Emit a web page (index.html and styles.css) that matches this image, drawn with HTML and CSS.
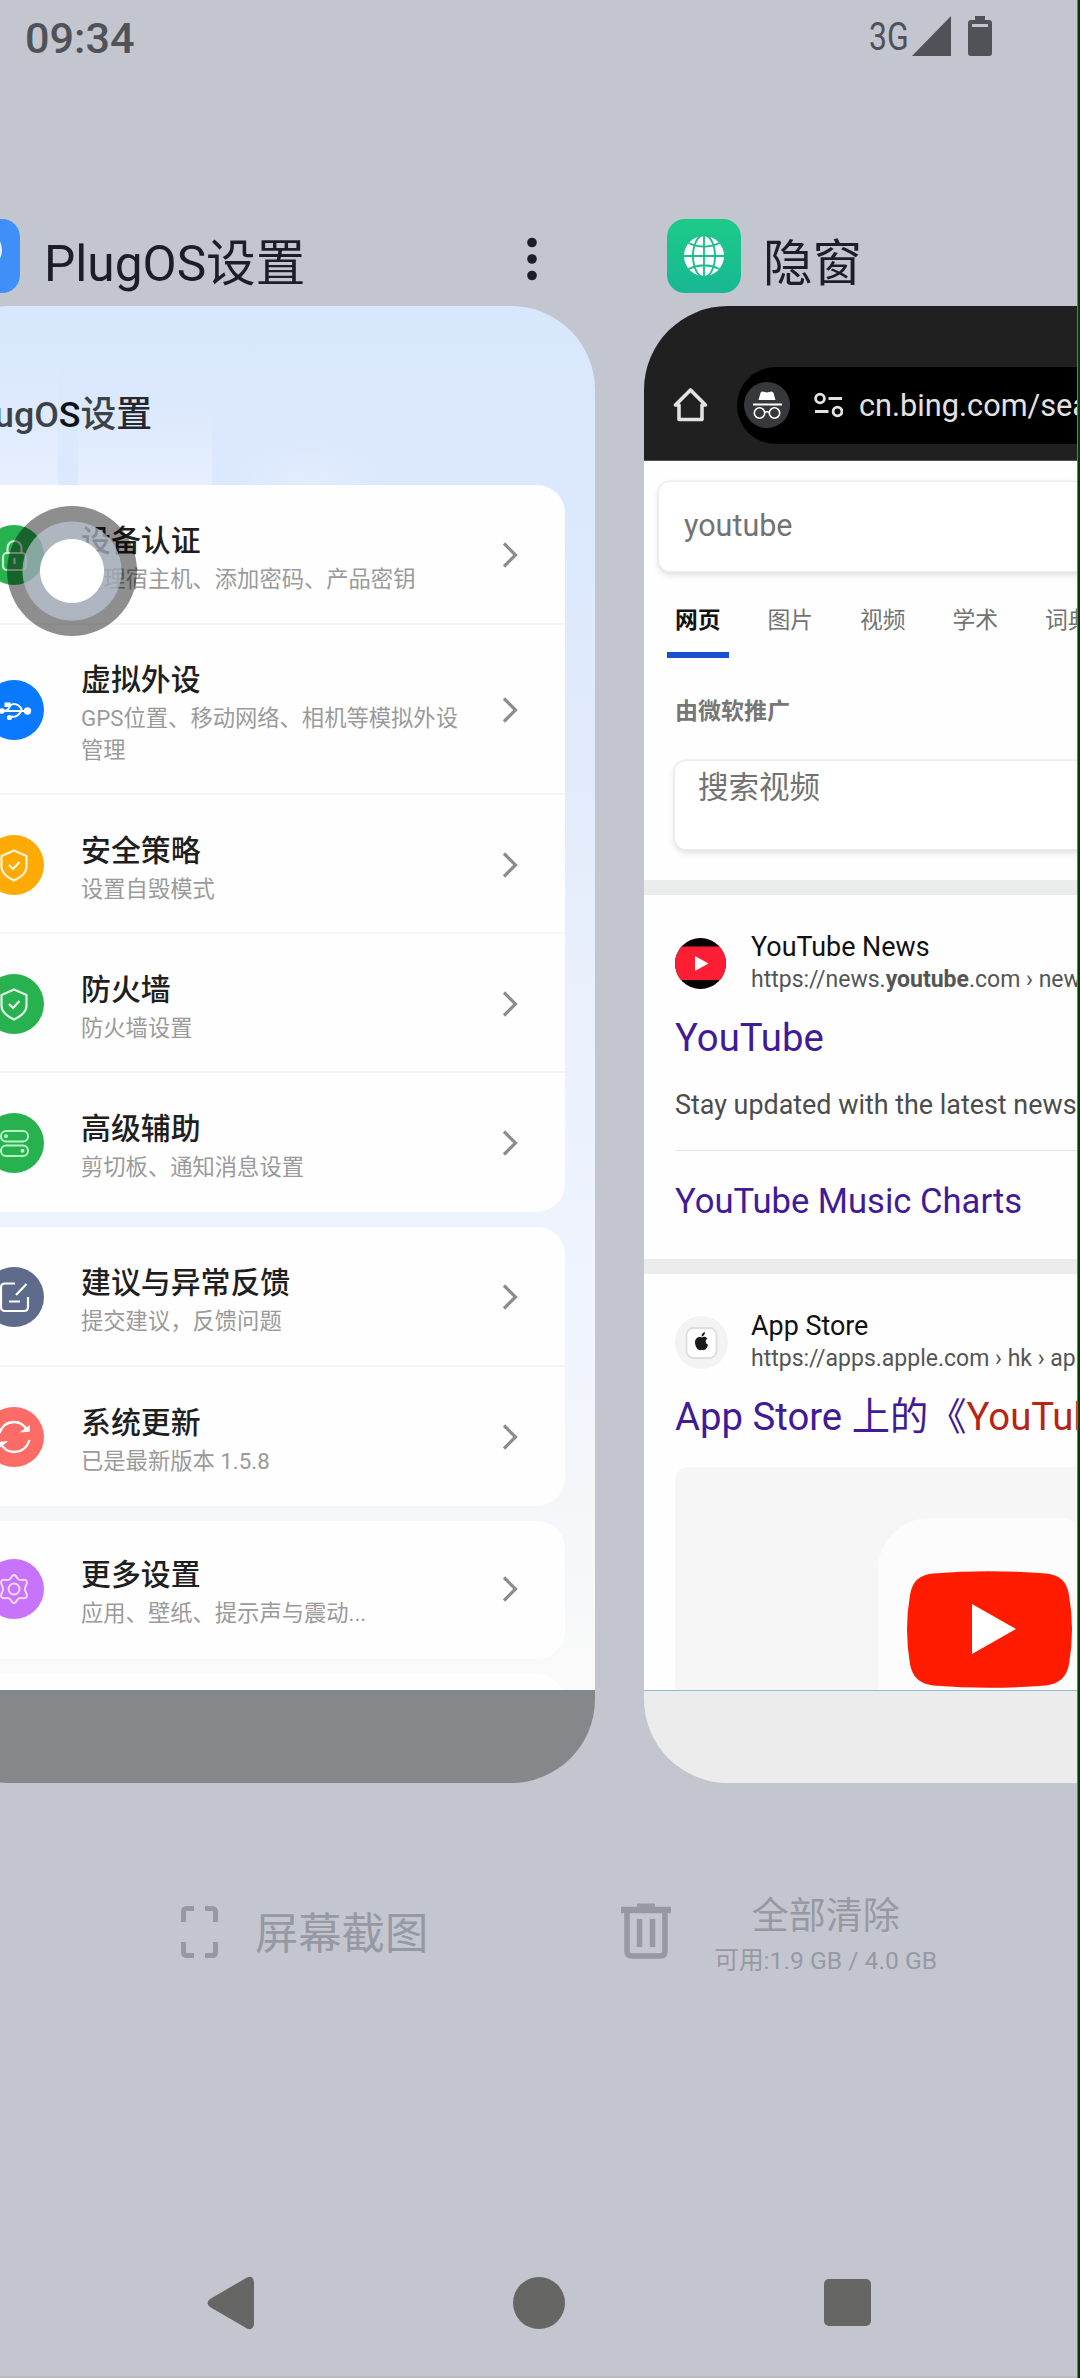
FILE: index.html
```html
<!DOCTYPE html>
<html lang="zh-CN">
<head>
<meta charset="utf-8">
<title>最近任务</title>
<link rel="stylesheet" href="styles.css">
</head>
<body>
<svg width="0" height="0" class="defs">
  <symbol id="chev" viewBox="0 0 16 26"><path d="M2 1.500 13.500 13 2 24.500" fill="none" stroke="#8c8c8c" stroke-width="3.200"/></symbol>
  <symbol id="shield" viewBox="0 0 60 60"><path d="M30 15.500 42.500 21V32c0 6-5 10-12.500 13.500-7.500-3.500-12.500-7.500-12.500-13.500V21z" fill="none" stroke="#fff" stroke-opacity=".85" stroke-width="2.200" stroke-linejoin="round"/><path d="m25 30 4 4 6.500-7" fill="none" stroke="#fff" stroke-opacity=".9" stroke-width="2.200"/></symbol>
</svg>
<div class="screen">
  <header class="status">
    <span class="clock">09:34</span>
    <div class="status-icons">
      <span class="net">3G</span>
      <svg width="39" height="40" viewBox="0 0 39 40"><path d="M39 0V40H0z" fill="#4f5256"/></svg>
      <svg class="battery" width="24" height="40" viewBox="0 0 24 40"><path d="M7 0h10v4h4q3 0 3 3v30q0 3-3 3H3q-3 0-3-3V7q0-3 3-3h4z" fill="#4f5256"/><path d="M4 8h16v3H4z" fill="#c3c6cf"/></svg>
    </div>
  </header>

  <main class="tasks">
    <section class="task">
      <div class="task-head">
        <svg width="74" height="74" viewBox="0 0 74 74"><rect width="74" height="74" rx="18" fill="#3f8ff8"/><circle cx="37" cy="31" r="19" fill="#fff" fill-opacity=".88"/></svg>
        <h1>PlugOS设置</h1>
        <svg class="more" width="10" height="44" viewBox="0 0 10 44" fill="#1b1e25"><circle cx="5" cy="5.500" r="4.800"/><circle cx="5" cy="22" r="4.800"/><circle cx="5" cy="38.500" r="4.800"/></svg>
      </div>
      <div class="window settings">
        <div class="set-body">
          <h2>PlugO<b>S</b>设<i>置</i></h2>
          <div class="panel">
            <div class="row">
              <svg class="ico green" viewBox="0 0 60 60"><rect x="19" y="28" width="23" height="17" rx="4" fill="none" stroke="#fff" stroke-opacity=".75" stroke-width="2.200"/><path d="M23.500 28v-5a7 7 0 0 1 14 0v5M30.500 33v6" fill="none" stroke="#fff" stroke-opacity=".75" stroke-width="2.200"/></svg>
              <div class="txt"><h3>设备认证</h3><p>管理宿主机、添加密码、产品密钥</p></div>
              <svg class="chev"><use href="#chev"/></svg>
            </div>
            <div class="row tall">
              <svg class="ico blue" viewBox="0 0 60 60" fill="none" stroke="#fff" stroke-width="2"><path d="M18 31h26M20 31q4 0 6-5 1-2 4-2 5 0 8 6M26 37l5-.5q3-.5 6-5"/><g fill="#fff" stroke="none"><circle cx="18" cy="31" r="2.800"/><circle cx="43.500" cy="31" r="3.700"/><path d="M20.500 22.500h6v4.500h-6z"/><circle cx="25.500" cy="37.500" r="2.600"/></g></svg>
              <div class="txt"><h3>虚拟外设</h3><p>GPS位置、移动网络、相机等模拟外设<br>管理</p></div>
              <svg class="chev"><use href="#chev"/></svg>
            </div>
            <div class="row">
              <svg class="ico orange"><use href="#shield"/></svg>
              <div class="txt"><h3>安全策略</h3><p>设置自毁模式</p></div>
              <svg class="chev"><use href="#chev"/></svg>
            </div>
            <div class="row">
              <svg class="ico green"><use href="#shield"/></svg>
              <div class="txt"><h3>防火墙</h3><p>防火墙设置</p></div>
              <svg class="chev"><use href="#chev"/></svg>
            </div>
            <div class="row">
              <svg class="ico green" viewBox="0 0 60 60" fill="none" stroke="#b5f5c8" stroke-width="2"><rect x="17" y="18" width="27" height="10.500" rx="5"/><rect x="17" y="32.500" width="27" height="10.500" rx="5"/><circle cx="22" cy="23.200" r="1"/><circle cx="38.500" cy="37.700" r="1"/></svg>
              <div class="txt"><h3>高级辅助</h3><p>剪切板、通知消息设置</p></div>
              <svg class="chev"><use href="#chev"/></svg>
            </div>
          </div>
          <div class="panel">
            <div class="row">
              <svg class="ico slate" viewBox="0 0 60 60" fill="none" stroke="#fff" stroke-width="2.200"><path d="M31 16.500H21q-4 0-4 4V40q0 4 4 4h19q4 0 4-4V30M32 28 42.500 17M25 34.500h11"/></svg>
              <div class="txt"><h3>建议与异常反馈</h3><p>提交建议，反馈问题</p></div>
              <svg class="chev"><use href="#chev"/></svg>
            </div>
            <div class="row">
              <svg class="ico red" viewBox="0 0 60 60" fill="none" stroke="#fff" stroke-width="2.300"><path d="M15.500 26q4-11 14.500-11 9 0 13.500 9M45.500 33q-4 12-15.500 12-9 0-13.500-9"/><path d="m38 24.500 7-.5V19.500zM22 35l-6.500.5V40z" fill="#fff" stroke-width="1.500"/></svg>
              <div class="txt"><h3>系统更新</h3><p>已是最新版本 1.5.8</p></div>
              <svg class="chev"><use href="#chev"/></svg>
            </div>
          </div>
          <div class="panel">
            <div class="row last">
              <svg class="ico purple" viewBox="0 0 60 60" fill="none" stroke="#f7d9ff" stroke-width="2" stroke-linejoin="round"><path d="M26.500 19.500q3.500-7 7 0 1.500 2 4.500 1.500 7-1 4 5.500-2 3.500 0 7 3 6.500-4 5.500-3-.5-4.500 1.500-3.500 7-7 0-1.500-2-4.500-1.500-7 1-4-5.500 2-3.500 0-7-3-6.500 4-5.500 3 .5 4.500-1.500z"/><circle cx="30" cy="30" r="5.500"/></svg>
              <div class="txt"><h3>更多设置</h3><p>应用、壁纸、提示声与震动...</p></div>
              <svg class="chev"><use href="#chev"/></svg>
            </div>
          </div>
          <div class="panel"><div class="row"></div></div>
        </div>
        <div class="set-foot"></div>
      </div>
    </section>

    <section class="task">
      <div class="task-head">
        <svg width="74" height="74" viewBox="0 0 74 74"><defs><linearGradient id="gg" x2="0" y2="1"><stop stop-color="#1ccb88"/><stop offset="1" stop-color="#18b795"/></linearGradient></defs><rect width="74" height="74" rx="18" fill="url(#gg)"/><circle cx="37" cy="37" r="20" fill="#fff"/><g fill="none" stroke="#1abf8f" stroke-width="1.900"><path d="M16 37h42M37 16v42M21.500 24q15.500 7.500 31 0M21.500 50q15.500-7.500 31 0"/><ellipse cx="37" cy="37" rx="11" ry="21"/></g></svg>
        <h1>隐窗</h1>
      </div>
      <div class="window browser">
        <div class="toolbar">
          <svg width="35" height="36" viewBox="0 0 35 36"><path d="M17.500 3 2.500 18H6v14.500h23V18h3.500z" fill="none" stroke="#e3e3e3" stroke-width="3.600" stroke-linejoin="round"/></svg>
          <div class="omnibox">
            <svg width="46" height="46" viewBox="0 0 46 46"><circle cx="23" cy="23" r="23" fill="#36383b"/><path d="m18.500 9.500 4.500 1 4.500-1q1.500 0 2 1.500L31.500 18h-17L16.500 11q.5-1.500 2-1.500z" fill="#fff"/><path d="M9 22.500h29" stroke="#fff" stroke-width="2"/><g fill="none" stroke="#fff" stroke-width="1.600"><circle cx="15.500" cy="31" r="5.200"/><circle cx="30.500" cy="31" r="5.200"/><path d="M20.500 30.500q2.500-1.500 5 0"/></g></svg>
            <svg class="tune" width="29" height="26" viewBox="0 0 29 26" fill="none" stroke="#e3e3e3" stroke-width="2.800"><circle cx="6" cy="6.500" r="4.400"/><circle cx="23.500" cy="19.500" r="4.400"/><path d="M14.500 6.500H28M1 19.500h13.500"/></svg>
            <span>cn.bing.com/search</span>
          </div>
        </div>
        <div class="page">
          <div class="box query">youtube</div>
          <nav class="tabs"><a class="on">网页</a><a>图片</a><a>视频</a><a>学术</a><a>词典</a></nav>
          <div class="promo">由微软推广</div>
          <div class="box video">搜索视频</div>
          <div class="band"></div>
          <article class="result">
            <div class="site">
              <svg width="51" height="51" viewBox="0 0 51 51"><defs><clipPath id="rc"><circle cx="25.500" cy="25.500" r="25.500"/></clipPath></defs><g clip-path="url(#rc)"><path d="M0 0h51v51H0z" fill="#0a0000"/><path d="M0 8.500h51v33.500H0z" fill="#fb1e35"/></g><path d="m20 18 13.500 7.500L20 33z" fill="#fff"/></svg>
              <div><div class="name">YouTube News</div><div class="url">https://news.<b>youtube</b>.com › news</div></div>
            </div>
            <h4>YouTube</h4>
            <p class="desc">Stay updated with the latest news</p>
            <div class="sub">YouTube Music Charts</div>
          </article>
          <div class="band"></div>
          <article class="result second">
            <div class="site">
              <svg width="53" height="53" viewBox="0 0 53 53"><circle cx="26.500" cy="26.500" r="26.500" fill="#f3f3f3"/><rect x="11.500" y="12" width="30" height="30" rx="7" fill="#fff" stroke="#dedede" stroke-width="1.800"/><path d="M26.800 21.500c2-1.200 4.200-.8 5.600 1-2.600 1.900-2.200 5 .7 6.300-1 3.200-2.900 5.600-4.600 5.500-1.200-.7-2-.7-3.300 0-2.200.4-5.300-4-5.200-8 .2-3.800 3.200-6.200 6.800-4.800zM26.500 20.500c0-2.400 1.500-4 3.400-4.500.2 2.300-1.200 4.200-3.400 4.500z" fill="#1b1b1b"/></svg>
              <div><div class="name">App Store</div><div class="url">https://apps.apple.com › hk › app</div></div>
            </div>
            <h4>App Store 上的《<em>YouTube</em></h4>
            <div class="thumb">
              <div class="tile"><svg width="165" height="117" viewBox="0 0 165 117"><path d="M26 2.500Q82-2 139 2.500 159 4 162 24q6 34 0 69-3 19-23 21.500-57 4.500-113 0Q6 112 3 93-3 58 3 24 6 4 26 2.500z" fill="#fe1b00"/><path d="m65 33 44 25-44 25z" fill="#fff"/></svg></div>
            </div>
          </article>
        </div>
        <div class="web-foot"></div>
      </div>
    </section>
  </main>

  <div class="actions">
    <div class="action">
      <svg width="37" height="52" viewBox="0 0 37 52" fill="none" stroke="#9799a2" stroke-width="5"><path d="M2.500 16V6q0-3.500 3.500-3.500h7M24 2.500h7q3.500 0 3.500 3.500v10M2.500 36v10q0 3.500 3.500 3.500h7M24 49.500h7q3.500 0 3.500-3.500V36"/></svg>
      <span class="shot">屏幕截图</span>
    </div>
    <div class="action">
      <svg width="50" height="57" viewBox="0 0 50 57" fill="none" stroke="#9799a2"><path d="M0 7h50" stroke-width="6.500"/><path d="M16 3h18" stroke-width="5"/><path d="M6 8v40q0 5 5 5h28q5 0 5-5V8" stroke-width="5.500"/><path d="M18.500 16v28M31.500 16v28" stroke-width="5.500"/></svg>
      <div class="clear"><span>全部清除</span><small>可用:1.9 GB / 4.0 GB</small></div>
    </div>
  </div>

  <footer class="navbar">
    <svg width="47" height="54" viewBox="0 0 47 54"><path d="M40 1.500Q46-1 47 6v42q-1 7-7 4.500L3 31q-5-4 0-8z" fill="#666765"/></svg>
    <svg width="52" height="52" viewBox="0 0 52 52"><circle cx="26" cy="26" r="26" fill="#666765"/></svg>
    <svg width="47" height="47" viewBox="0 0 47 47"><rect width="47" height="47" rx="5" fill="#666765"/></svg>
  </footer>

  <div class="touch"></div>
  <div class="edge"></div>
</div>
</body>
</html>
```
FILE: styles.css
```css
* { box-sizing: border-box; margin: 0; padding: 0; }
body {
  background: #c3c6cf;
  font-family: Roboto, "Noto Sans CJK SC", sans-serif;
  color: #1b1e25;
}
svg { display: block; flex: none; }
.defs { position: absolute; }
h1, h2, h3, h4 { font-weight: 400; }
.screen {
  position: relative;
  width: 1080px;
  height: 2378px;
  overflow: hidden;
  display: flex;
  flex-direction: column;
}

.status {
  height: 200px;
  padding: 16px 88px 0 25px;
  display: flex;
  justify-content: space-between;
  align-items: flex-start;
  color: #4f5256;
}
.clock { font-size: 43.200px; line-height: 46px; font-weight: 500; }
.status-icons { display: flex; align-items: flex-start; }
.net {
  width: 43px;
  font-size: 39px;
  line-height: 42px;
  white-space: nowrap;
  transform: scaleX(.82);
  transform-origin: left;
}
.battery { margin-left: 17px; }

.tasks { display: flex; gap: 49px; margin-left: -76px; height: 1583px; }
.task { width: 671px; flex: none; display: flex; flex-direction: column; }
.task-head {
  height: 106px;
  padding: 19px 58px 13px 23px;
  display: flex;
  align-items: center;
}
.task-head h1 { font-size: 49.600px; line-height: 50px; margin: 15px 0 0 22px; }
.task:first-child .task-head { padding-left: 22px; }
.task:first-child h1 { margin-left: 24px; }
.more { margin: 6px 0 0 auto; }
.window {
  height: 1477px;
  border-radius: 84px;
  overflow: hidden;
  display: flex;
  flex-direction: column;
}

.set-body {
  height: 1384px;
  overflow: hidden;
  padding: 91px 30px 0 29px;
  background:
    linear-gradient(rgba(255,255,255,0), rgba(255,255,255,.3)) 0 50px / 134px 130px no-repeat,
    linear-gradient(rgba(255,255,255,0), rgba(255,255,255,.3)) 154px 90px / 134px 90px no-repeat,
    radial-gradient(closest-side, rgba(255,255,255,.2), rgba(255,255,255,0)) 310px 130px / 150px 100px no-repeat,
    linear-gradient(#d9e7fd 0, #dce9fd 220px, #e2ebfb 480px, #ebf1fc 720px, #eef3fe 950px, #f4f6f9 1200px, #fafafa 1384px);
}
.set-foot { flex: 1; background: #84888a; }
.settings h2 {
  height: 88px;
  margin-left: 9px;
  font-size: 35.800px;
  line-height: 37px;
  font-weight: 500;
  color: #3d4248;
}
.settings h2 b { font-weight: 500; color: #0d1219; }
.settings h2 i { font-style: normal; color: #24282d; }
.panel { background: #fefefe; border-radius: 28px; margin-bottom: 15px; }
.row {
  height: 139px;
  padding: 2px 47px 0 31px;
  display: flex;
  align-items: center;
  border-bottom: 2px solid #f5f5f6;
}
.row:first-child:not(:last-child) { height: 140px; }
.row:last-child { border-bottom-color: transparent; }
.last { padding-top: 0; height: 138px; }
.tall { height: 170px; }
.ico { width: 60px; height: 60px; border-radius: 50%; }
.green { background: #28b24f; }
.blue { background: #0a79fd; }
.orange { background: #fdab04; }
.slate { background: #5f6b8b; }
.red { background: #fd6b67; }
.purple { background: #c873fb; }
.txt { margin-left: 37px; padding-top: 4px; flex: 1; }
.txt h3 { font-size: 29.900px; line-height: 44px; font-weight: 500; color: #1f1f1f; }
.txt p { font-size: 22.300px; line-height: 32px; color: #9a9a9a; white-space: nowrap; }
.chev { width: 16px; height: 26px; }

.toolbar {
  height: 155px;
  padding: 61px 0 17px 29px;
  display: flex;
  align-items: center;
  gap: 29px;
  background: #202020;
  border-bottom: 1px solid #555;
}
.omnibox {
  flex: 1;
  height: 77px;
  border-radius: 39px 0 0 39px;
  padding-left: 7px;
  display: flex;
  align-items: center;
  background: #000;
  color: #e3e3e3;
  font-size: 30.700px;
}
.tune { margin: 0 16px 0 24px; }
.page {
  height: 1229px;
  padding-top: 21px;
  overflow: hidden;
  background: #fefefe;
}
.box {
  height: 89px;
  border-radius: 11px;
  background: #fff;
  color: #737373;
  font-size: 30.500px;
  box-shadow: 0 0 0 1.500px #ececec, 0 3px 7px rgba(0,0,0,.16);
}
.query { margin-left: 15px; padding-left: 25px; line-height: 88px; }
.video { margin: 37px 0 31px 31px; padding-left: 23px; line-height: 53px; height: 88px; }
.tabs { display: flex; gap: 31px; padding: 29px 0 0 23px; height: 87px; }
.tabs a {
  width: 61.500px;
  flex: none;
  text-align: center;
  font-size: 22.800px;
  line-height: 42px;
  color: #737373;
  border-bottom: 6px solid transparent;
}
.tabs .on { font-weight: 700; color: #111; border-color: #1c4fcf; }
.promo { margin: 42px 0 0 31px; font-size: 23px; line-height: 24px; font-weight: 600; color: #767676; }
.band { height: 15px; background: #ebecec; }
.result { padding: 35px 0 37px 31px; white-space: nowrap; }
.site { display: flex; align-items: center; gap: 25px; }
.name { font-size: 26.900px; line-height: 34px; color: #111; }
.url { font-size: 23px; line-height: 32px; color: #555; }
.result h4 { margin-top: 20px; font-size: 38.300px; line-height: 44px; color: #411b96; }
.result em { font-style: normal; color: #b92414; }
.desc { margin-top: 27px; font-size: 26.900px; line-height: 36px; color: #4c4c4c; }
.sub {
  margin-top: 27px;
  padding-top: 30px;
  border-top: 1px solid #e3e3e3;
  font-size: 34.600px;
  line-height: 41px;
  color: #411b96;
}
.second { padding: 35px 0 0 31px; }
.second .site { gap: 23px; }
.second h4 { margin-top: 20px; }
.thumb {
  width: 600px;
  height: 240px;
  margin-top: 28px;
  border-radius: 14px;
  padding: 51px 0 0 203px;
  background: #f6f6f6;
}
.tile { height: 189px; width: 230px; border-radius: 52px 52px 0 0; background: #fcfcfc; padding: 53px 0 0 29px; }
.web-foot { flex: 1; background: #ececec; border-top: 1.500px solid #8fbdcd; }

.actions { height: 297px; display: flex; align-items: center; color: #9799a2; padding: 0 0 0 181px; }
.action { display: flex; align-items: center; }
.action + .action { margin-left: 193px; }
.shot { margin: 6px 0 0 37px; font-size: 43.300px; line-height: 50px; }
.clear { display: flex; flex-direction: column; align-items: center; margin: 9px 0 0 43px; }
.clear span { font-size: 37px; line-height: 44px; }
.clear small { font-size: 24.700px; line-height: 32px; margin-top: 6px; white-space: nowrap; }

.navbar {
  flex: 1;
  padding: 149px 209px 0 207px;
  display: flex;
  align-items: center;
  justify-content: space-between;
  border-bottom: 2px solid #b8bbc2;
}

.touch {
  position: absolute;
  left: 7px;
  top: 506px;
  width: 130px;
  height: 130px;
  border-radius: 50%;
  background: radial-gradient(circle, #fff 31.500px, rgba(188,200,215,.68) 32.500px 49px, transparent 50px), rgba(0,0,0,.44);
}
.edge {
  position: absolute;
  right: 0;
  top: 0;
  width: 3px;
  height: 100%;
  background: #003c00;
  border-left: 1px solid #3a9a40;
}
```
